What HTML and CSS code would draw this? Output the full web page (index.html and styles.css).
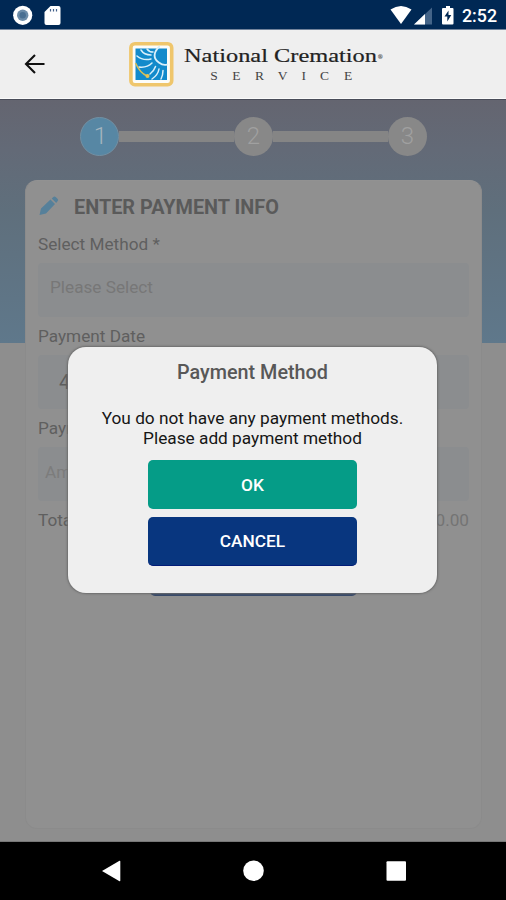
FILE: index.html
```
<!DOCTYPE html>
<html lang="en">
<head>
<meta charset="utf-8">
<title>Payment Info</title>
<link rel="stylesheet" href="styles.css">
</head>
<body>
<div class="phone">
  <div class="status">
    <svg class="status-left" width="54" height="30" viewBox="0 0 54 30">
      <circle cx="12.7" cy="15.3" r="9.6" fill="#fff"/>
      <circle cx="12.7" cy="15.3" r="5.7" fill="#6c8ca8"/>
      <circle cx="12.7" cy="15.3" r="3.2" fill="#496f91"/>
      <path d="M40.500 6H48.500Q50.500 6 50.500 8V23Q50.500 25 48.500 25H36.500Q34.500 25 34.500 23V12Z" fill="#fff"/>
      <path d="M40.500 9v2.500M43.500 9v2.500M46.500 9v2.500" stroke="#43618a" stroke-width="1.200"/>
    </svg>
    <svg class="status-right" width="66" height="30" viewBox="0 0 66 30">
      <path d="M0.500 9.500Q11 2.500 21.500 9.500L11 24Z" fill="#fff"/>
      <path d="M42 7.500V24.500H24Z" fill="#446488"/>
      <path d="M35 14V24.500H24Z" fill="#fff"/>
      <path d="M56 6h4v2h2.500q1 0 1 1v14.500q0 1-1 1h-9.500q-1 0-1-1V9q0-1 1-1H56Z" fill="#fff"/>
      <path d="M58.500 10.500l-4 6h2.800v5l4-6.500H58.500Z" fill="#002854"/>
    </svg>
    <span class="clock">2:52</span>
  </div>
  <header class="header">
    <svg class="back" width="22" height="22" viewBox="0 0 22 22"><path d="M20.500 11H2.500M11 2L2 11L11 20" fill="none" stroke="#111" stroke-width="2.100"/></svg>
    <svg class="logo" width="260" height="50" viewBox="0 0 260 50">
      <rect x="1.900" y="4.700" width="40.800" height="41" rx="4" fill="#fcfcf8" stroke="#efc66c" stroke-width="3.600"/>
      <rect x="6.500" y="9.500" width="31.500" height="31.500" fill="#128acb"/>
      <g fill="none" stroke="#d9effa" stroke-width="1.500" stroke-linecap="round">
        <path d="M29 9.500Q19 20 29 27Q33 30 37.500 29" stroke-width="2" transform="translate(3.500 -1) scale(.92)"/>
        <path d="M12 11Q15 16 22 16"/>
        <path d="M18 10Q20 13 24 13"/>
        <path d="M8 17Q14 22 22 20"/>
        <path d="M10 28Q18 29 23 24"/>
        <path d="M21 35Q25 32 26.500 27.500"/>
        <path d="M23 40Q29 36 30 30"/>
        <path d="M32 40Q34 36 34 31.500"/>
      </g>
      <path d="M6.500 24Q11 34 18 37" fill="none" stroke="#d6bf58" stroke-width="1.600"/>
      <circle cx="18.500" cy="37" r="2" fill="#e7c456"/>
      <text class="logo-name" x="55" y="23.200" textLength="193" lengthAdjust="spacingAndGlyphs">National Cremation</text>
      <text class="logo-reg" x="249" y="19.500">®</text>
      <g class="logo-sub">
        <text x="81.300" y="40.700">S</text><text x="103.300" y="40.700">E</text><text x="126" y="40.700">R</text><text x="148.700" y="40.700">V</text><text x="172.500" y="40.700">I</text><text x="191" y="40.700">C</text><text x="215" y="40.700">E</text>
      </g>
    </svg>
  </header>
  <main class="content">
    <div class="steps">
      <span class="step active">1</span><span class="bar"></span><span class="step">2</span><span class="bar"></span><span class="step">3</span>
    </div>
    <section class="card">
      <h1 class="title">
        <svg width="20" height="20" viewBox="0 0 20 20"><path d="M0.500 19L2 12.500L11.500 3.500L16 8L7 17.500ZM12.700 2.500L14.700 0.800Q15.700 0 16.700 1L18.700 3Q19.600 4 18.700 5L17.200 6.900Z" fill="#56809a"/></svg>
        <span>ENTER PAYMENT INFO</span>
      </h1>
      <div class="label">Select Method *</div>
      <div class="field select">Please Select</div>
      <div class="label">Payment Date</div>
      <div class="field date">4</div>
      <div class="label">Payment</div>
      <div class="field amount">Amount</div>
      <div class="total"><span>Total</span><span class="sum">$0.00</span></div>
      <div class="submit"></div>
    </section>
    <div class="dialog">
      <h2 class="dialog-title">Payment Method</h2>
      <p class="message">You do not have any payment methods.<br>Please add payment method</p>
      <button class="btn ok">OK</button>
      <button class="btn cancel">CANCEL</button>
    </div>
  </main>
  <nav class="nav">
    <svg width="506" height="58" viewBox="0 0 506 58" fill="#fff">
      <path d="M102 29L119.500 18.800Q120.300 18.500 120.300 19.500V38.500Q120.300 39.500 119.500 39.200Z"/>
      <circle cx="253.500" cy="28.700" r="10.300"/>
      <rect x="386.500" y="19.300" width="19.500" height="19.500" rx="1"/>
    </svg>
  </nav>
</div>
</body>
</html>
```
FILE: styles.css
```
* { box-sizing: border-box; }
body { margin: 0; font-family: Roboto, "Liberation Sans", sans-serif; }
.phone { width: 506px; height: 900px; display: flex; flex-direction: column; overflow: hidden; background: #000; }
.status { height: 30px; background: #002854; border-bottom: 1px solid #72839b; display: flex; align-items: flex-start; padding: 0 9px 0 10px; flex: none; }
.status-right { margin-left: auto; }
.clock { width: 35px; margin-left: 6px; color: #fff; font-size: 17.800px; font-weight: 500; line-height: 32px; white-space: nowrap; }
.header { height: 69px; flex: none; background: #efefef; border-bottom: 1px solid #fafafa; display: flex; padding: 9px 0 0 24px; }
.back { margin-top: 14px; }
.logo { margin-left: 83px; }
.logo-name { font: 19.500px "Liberation Serif", serif; fill: #222; stroke: #222; stroke-width: .2px; }
.logo-reg { font: 6px "Liberation Serif", serif; fill: #555; stroke: #777; stroke-width: .3px; }
.logo-sub { font: 13.500px "Liberation Serif", serif; fill: #444; }
.content { height: 743px; flex: none; position: relative; padding: 17px 24px 0 25px; border-top: 1px solid #494c59; border-bottom: 1px solid #777; background: linear-gradient(#646570 0, #636a77 50px, #5f6f7c 110px, #5f788b 243px, #8e8e8e 243px); }
.steps { display: flex; align-items: center; margin: 0 55px; height: 38px; }
.step { width: 39px; height: 39px; flex: none; border-radius: 50%; background: #888; color: #a0a0a0; font-size: 24px; font-weight: 300; line-height: 39px; text-align: center; }
.step.active { background: #5787a4; color: #a5b5bf; border: 1px solid #7290a3; line-height: 37px; padding-left: 2px; }
.bar { flex: 1; height: 11px; background: #858585; }
.card { margin-top: 25px; height: 649px; border-radius: 12px; border: 1px solid #8b8b8b; border-top-color: #929292; background: #909090; padding: 12px 12px 0; color: #5f5f5f; display: flex; flex-direction: column; }
.title { margin: 0 0 12px 1px; height: 28px; display: flex; align-items: center; gap: 15px; color: #5a5a5a; font-size: 19.850px; font-weight: 700; line-height: 27px; }
.title svg { margin-top: -3px; }
.label { height: 22px; font-size: 17.200px; line-height: 22px; }
.field { height: 54px; flex: none; border-radius: 4px; background: #8b8d8f; line-height: 49px; font-size: 17.200px; color: #777; }
.select { margin: 8px 0; padding-left: 12px; }
.date { margin: 8px 0; padding-left: 21px; font-size: 20px; line-height: 54px; color: #5d5d5d; }
.amount { margin: 8px 0 10px; padding-left: 7px; line-height: 51px; color: #7c7c7c; }
.total { display: flex; justify-content: space-between; font-size: 17.200px; line-height: 18px; margin-bottom: 3px; }
.sum { color: #747474; }
.submit { width: 207px; height: 49px; margin: 15px auto 0; border-radius: 5px; background: #36496a; }
.dialog { position: absolute; left: 68px; top: 247px; width: 369px; height: 246px; border-radius: 18px; background: #efefef; box-shadow: 0 0 2px 1px #6c6c6c; display: flex; flex-direction: column; align-items: center; }
.dialog-title { margin: 14px 0 0; font-size: 19.800px; line-height: 24px; font-weight: 500; color: #585858; }
.message { margin: 23px 0 0; font-size: 17.250px; line-height: 20px; color: #161616; text-align: center; white-space: nowrap; }
.btn { width: 209px; height: 49px; border: 0; border-radius: 5px; padding: 0; font: 500 17.300px Roboto, sans-serif; color: #fff; }
.ok { margin-top: 12px; background: #059c87; }
.cancel { margin-top: 8px; background: #08367f; border-bottom: 1px solid #021c78; }
.nav { height: 58px; flex: none; background: #000; }
.nav svg { display: block; }
```
